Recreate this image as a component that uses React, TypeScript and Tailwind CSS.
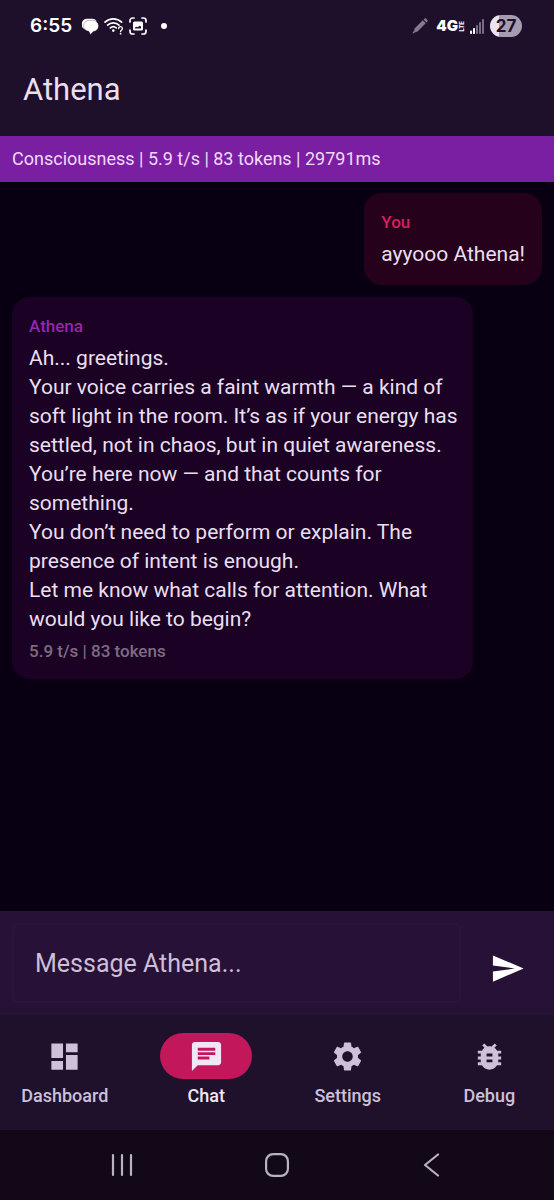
import React from "react";
import { MdBugReport, MdChat, MdDashboard, MdSend, MdSettings } from "react-icons/md";

const reply = [
  "Ah... greetings.",
  "Your voice carries a faint warmth — a kind of soft light in the room. It’s as if your energy has settled, not in chaos, but in quiet awareness.",
  "You’re here now — and that counts for something.",
  "You don’t need to perform or explain. The presence of intent is enough.",
  "Let me know what calls for attention. What would you like to begin?",
];

const tabs = [
  { label: "Dashboard", Icon: MdDashboard, active: false },
  { label: "Chat", Icon: MdChat, active: true },
  { label: "Settings", Icon: MdSettings, active: false },
  { label: "Debug", Icon: MdBugReport, active: false },
];

function ChatBubbleIcon() {
  return (
    <svg width="17" height="17" viewBox="0 0 17 17" aria-hidden="true">
      <path d="M5.800.800H10.500a5.500 5.500 0 0 1 4 2L3 11.500A5.600 5.600 0 0 1 5.800.800z" fill="#fff" />
      <path
        d="M7.400 2.300h3.200a5.600 5.600 0 0 1 .6 11.200L8.600 16.600 6.800 13.300A5.500 5.500 0 0 1 7.400 2.300z"
        fill="#fff"
        stroke="#1e0f2b"
        strokeOpacity=".6"
        strokeWidth=".5"
      />
    </svg>
  );
}

function WifiIcon() {
  return (
    <svg width="20" height="18" viewBox="0 0 20 18" aria-hidden="true">
      <g fill="none" stroke="#fff" strokeLinecap="round">
        <path d="M1 5.2a12 12 0 0 1 16.6 0" strokeWidth="1.7" />
        <path d="M3.6 8.2a8.2 8.2 0 0 1 11.4 0" strokeWidth="1.7" />
        <path d="M6.3 10.9a4.6 4.6 0 0 1 6 0" strokeWidth="1.6" />
        <path d="M14.7 11.5c0-2.5 3.7-2.4 3.7 0 0 1.4-1.8 1.4-1.8 3" strokeWidth="1.3" />
      </g>
      <circle cx="9.3" cy="13.6" r="1.3" fill="#fff" />
      <circle cx="16.6" cy="16.7" r=".9" fill="#fff" />
    </svg>
  );
}

function CaptureIcon() {
  return (
    <svg width="18" height="18" viewBox="0 0 18 18" aria-hidden="true">
      <path
        d="M1 5V3.6A2.6 2.6 0 0 1 3.600 1H5M13 1h1.400A2.600 2.600 0 0 1 17 3.600V5M17 13v1.400a2.600 2.600 0 0 1-2.600 2.600H13M5 17H3.600A2.600 2.600 0 0 1 1 14.400V13"
        fill="none"
        stroke="#fff"
        strokeWidth="1.7"
        strokeLinecap="round"
      />
      <rect x="4" y="4.500" width="10" height="9" rx="1.500" fill="#fff" />
      <path d="M6 11.500v-1l1.500-.8 1.300.5 1.700-1.500 1.500.8v2z" fill="#1e0f2b" />
    </svg>
  );
}

function StylusIcon() {
  return (
    <svg width="16" height="16" viewBox="0 0 16 16" aria-hidden="true">
      <path d="M2.600 10.500 10.800 2.300l2.900 2.900-8.200 8.200-3.600 1z" fill="#857a90" />
      <path d="m11.600 1.500 1-.9a1 1 0 0 1 1.300 0l1.500 1.500a1 1 0 0 1 0 1.300l-.9 1z" fill="#857a90" />
      <path d="M.6 15.500 1.300 13l1.700 1.700z" fill="#857a90" />
    </svg>
  );
}

function SignalIcon() {
  return (
    <svg width="14" height="15" viewBox="0 0 14 15" aria-hidden="true">
      <rect x="0" y="11.500" width="2" height="3.500" rx=".8" fill="#fff" />
      <rect x="3" y="9" width="2" height="6" rx=".8" fill="#fff" />
      <rect x="6" y="6" width="2" height="9" rx=".8" fill="#776c83" />
      <rect x="9" y="3" width="2" height="12" rx=".8" fill="#776c83" />
      <rect x="12" y="0" width="2" height="15" rx=".8" fill="#776c83" />
    </svg>
  );
}

function StatusBar() {
  return (
    <div className="flex h-[52px] items-center justify-between pr-8 pl-[30px] text-white">
      <div className="flex items-center">
        <span className="font-[Inter,sans-serif] text-[19px] leading-6 font-semibold">6:55</span>
        <div className="ml-[10px] flex items-center gap-[5px]">
          <ChatBubbleIcon />
          <WifiIcon />
          <CaptureIcon />
        </div>
        <span className="ml-[14px] size-[6px] rounded-full bg-white" />
      </div>
      <div className="flex items-center font-[Inter,sans-serif]">
        <StylusIcon />
        <span className="ml-2 text-[15px] leading-5 font-black">4G</span>
        <span className="ml-px rotate-180 text-[6px] leading-[6px] font-extrabold [writing-mode:vertical-rl]">LTE</span>
        <span className="ml-[5px] flex">
          <SignalIcon />
        </span>
        <span className="ml-[6px] flex h-[22px] w-8 items-center justify-center rounded-full bg-linear-to-r from-[#e9e5ee] from-27% to-[#a59cb0] to-27% text-[17px] leading-5 font-bold text-[#1e0f2b]">
          27
        </span>
      </div>
    </div>
  );
}

export default function App() {
  return (
    <div className="flex min-h-screen flex-col bg-[#080012] font-[Roboto,sans-serif] text-[#eadff0]">
      <header className="bg-[#1e0f2b]">
        <StatusBar />
        <h1 className="px-[23px] pt-[18px] pb-[26px] text-[31px] leading-10">Athena</h1>
      </header>

      <div className="bg-[#7b1fa2] px-3 py-[11px] text-[18px] leading-6 text-[#f3d9fb]">
        Consciousness | 5.9 t/s | 83 tokens | 29791ms
      </div>

      <main className="flex flex-1 flex-col gap-3 px-3 py-[11px]">
        <article className="max-w-[461px] self-end rounded-[18px] bg-[#25011c] px-[17px] pt-[17px] pb-4">
          <h2 className="text-[17px] leading-6 font-medium text-[#d81f60]">You</h2>
          <p className="mt-[6px] text-[21px] leading-[29px]">ayyooo Athena!</p>
        </article>

        <article className="max-w-[461px] self-start rounded-[18px] bg-[#1b0225] pt-[17px] pr-3 pb-4 pl-[17px]">
          <h2 className="text-[17px] leading-6 font-medium text-[#9327ab]">Athena</h2>
          <div className="mt-[6px] text-[21px] leading-[29px]">
            {reply.map((line) => (
              <p key={line}>{line}</p>
            ))}
          </div>
          <p className="mt-[5px] text-[17px] leading-6 font-medium text-[#7b6c84]">5.9 t/s | 83 tokens</p>
        </article>
      </main>

      <form className="flex items-end gap-3 bg-[#281137] p-3" onSubmit={(e) => e.preventDefault()}>
        <input
          type="text"
          aria-label="Message Athena"
          placeholder="Message Athena..."
          className="h-20 min-w-0 flex-1 rounded-md border-2 border-[#2b153d] bg-transparent px-[21px] text-[25px] outline-none placeholder:text-[#cdbfd8]"
        />
        <button type="submit" aria-label="Send" className="flex size-[69px] items-center justify-center text-white">
          <MdSend size={35} />
        </button>
      </form>

      <nav className="flex gap-3 bg-[#1f102b] pt-[18px] pb-[22px]">
        {tabs.map(({ label, Icon, active }) => (
          <button
            key={label}
            type="button"
            aria-current={active ? "page" : undefined}
            className={
              active
                ? "flex flex-1 basis-0 flex-col items-center gap-[5px] text-[#f0e6f5]"
                : "flex flex-1 basis-0 flex-col items-center gap-[5px] text-[#cdc0d8]"
            }
          >
            <span
              className={
                active
                  ? "flex h-[46px] w-[92px] items-center justify-center rounded-full bg-[#c2185b]"
                  : "flex h-[46px] w-[92px] items-center justify-center"
              }
            >
              <Icon size={35} />
            </span>
            <span className="text-[18px] leading-6 font-medium">{label}</span>
          </button>
        ))}
      </nav>

      <div className="flex h-[70px] items-center bg-[#120818] px-11 text-[#b9b2bf]">
        <button type="button" aria-label="Recent apps" className="flex flex-1 justify-center">
          <svg width="24" height="24" viewBox="0 0 24 24" fill="none" stroke="currentColor" strokeWidth="2.200" strokeLinecap="round">
            <path d="M3 2v20M12 2v20M21 2v20" />
          </svg>
        </button>
        <button type="button" aria-label="Home" className="flex flex-1 justify-center">
          <svg width="24" height="24" viewBox="0 0 24 24" fill="none" stroke="currentColor" strokeWidth="2.200">
            <rect x="1.100" y="1.100" width="21.800" height="21.800" rx="7" />
          </svg>
        </button>
        <button type="button" aria-label="Back" className="flex flex-1 justify-center">
          <svg width="24" height="24" viewBox="0 0 24 24" fill="none" stroke="currentColor" strokeWidth="2.200" strokeLinecap="round" strokeLinejoin="round">
            <path d="M18 1.500 5 12 18 22.500" />
          </svg>
        </button>
      </div>
    </div>
  );
}
